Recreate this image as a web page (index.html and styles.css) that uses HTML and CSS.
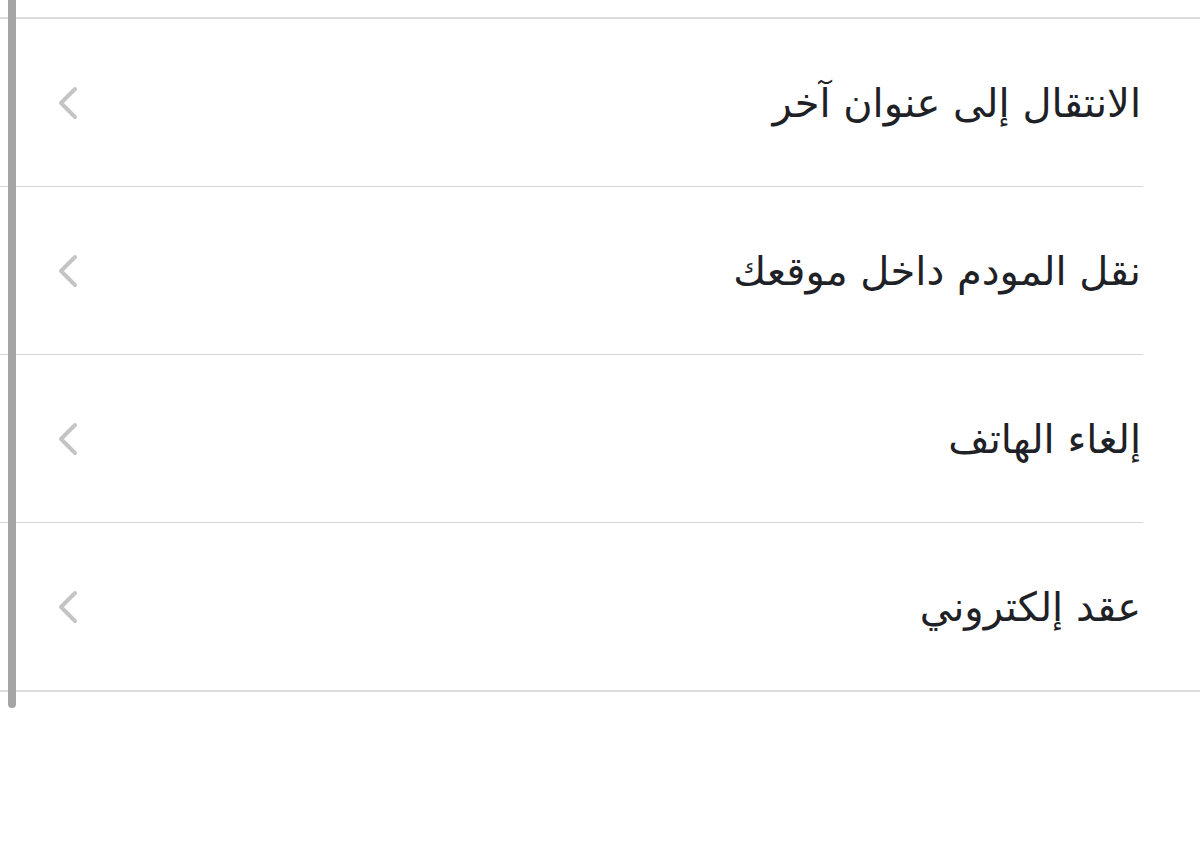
FILE: index.html
```html
<!DOCTYPE html>
<html lang="ar" dir="rtl">
<head>
    <meta charset="UTF-8">
    <meta name="viewport" content="width=device-width, initial-scale=1.0">
    <title>خدمات الهاتف</title>
    <link rel="stylesheet" href="styles.css">
</head>
<body>
    <div class="scrollbar"></div>
    <div class="page">
        <ul class="menu">
            <li class="menu-item">
                <span class="label">الانتقال إلى عنوان آخر</span>
                <svg class="chevron" viewBox="0 0 24 36" width="24" height="36"><path d="M20 4 L6 18 L20 32"/></svg>
            </li>
            <li class="menu-item">
                <span class="label">نقل المودم داخل موقعك</span>
                <svg class="chevron" viewBox="0 0 24 36" width="24" height="36"><path d="M20 4 L6 18 L20 32"/></svg>
            </li>
            <li class="menu-item">
                <span class="label">إلغاء الهاتف</span>
                <svg class="chevron" viewBox="0 0 24 36" width="24" height="36"><path d="M20 4 L6 18 L20 32"/></svg>
            </li>
            <li class="menu-item">
                <span class="label">عقد إلكتروني</span>
                <svg class="chevron" viewBox="0 0 24 36" width="24" height="36"><path d="M20 4 L6 18 L20 32"/></svg>
            </li>
        </ul>
    </div>
</body>
</html>
```

FILE: styles.css
```css
body {
    margin: 0;
    background-color: #ffffff;
    font-family: "DejaVu Sans", "Noto Sans", sans-serif;
    color: #1e2126;
}
.scrollbar {
    position: absolute;
    left: 8px;
    top: 0;
    width: 8px;
    height: 708px;
    background-color: #a5a5a5;
    border-radius: 0 0 4px 4px;
}
.page {
    padding-top: 17px;
}
.menu {
    list-style: none;
    margin: 0;
    padding: 0;
    border-top: 2px solid #dcdcdc;
    border-bottom: 2px solid #dcdcdc;
}
.menu-item {
    display: flex;
    align-items: center;
    justify-content: space-between;
    height: 167px;
    margin-right: 57px;
    padding-left: 55px;
    border-bottom: 1px solid #d6d6d6;
}
.menu-item:last-child {
    border-bottom: none;
}
.label {
    font-size: 40px;
    padding-right: 2px;
}
.chevron {
    fill: none;
    stroke: #c4c4c4;
    stroke-width: 4;
    stroke-linecap: round;
    stroke-linejoin: round;
}
```
